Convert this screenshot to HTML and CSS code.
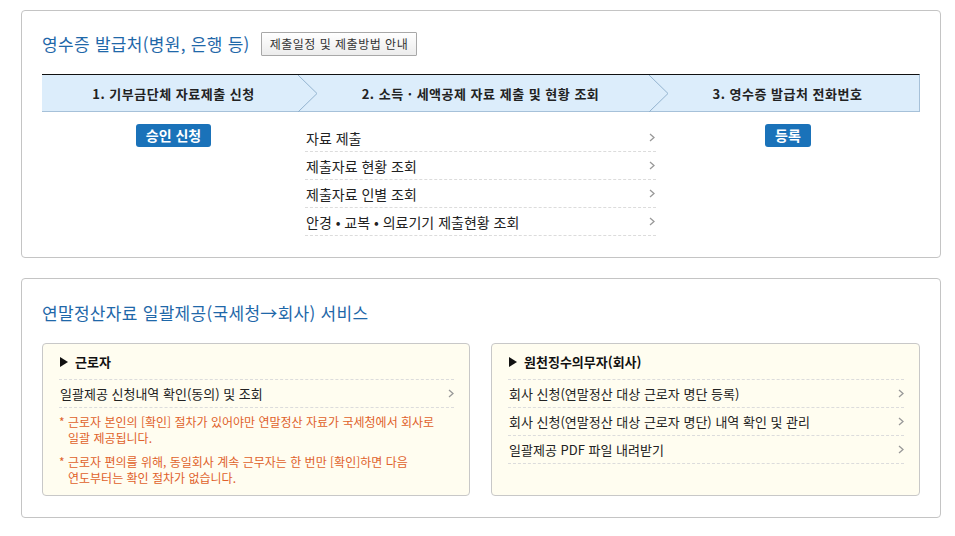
FILE: index.html
```html
<!DOCTYPE html>
<html lang="ko">
<head>
<meta charset="utf-8">
<title>영수증 발급처</title>
<link rel="stylesheet" href="styles.css">
</head>
<body>
<div class="page">
  <section class="panel panel-receipt">
    <div class="panel-head">
      <h2 class="panel-title">영수증 발급처(병원, 은행 등)</h2>
      <button class="guide-btn" type="button">제출일정 및 제출방법 안내</button>
    </div>
    <div class="steps">
      <div class="step">1. 기부금단체 자료제출 신청
        <svg class="step-arrow" viewBox="0 0 20 37" preserveAspectRatio="none"><polyline points="0,0 19,18.5 0,37" fill="none" stroke="#93b3cf" stroke-width="1"/></svg>
      </div>
      <div class="step">2. 소득 · 세액공제 자료 제출 및 현황 조회
        <svg class="step-arrow" viewBox="0 0 20 37" preserveAspectRatio="none"><polyline points="0,0 19,18.5 0,37" fill="none" stroke="#93b3cf" stroke-width="1"/></svg>
      </div>
      <div class="step">3. 영수증 발급처 전화번호</div>
    </div>
    <div class="step-body">
      <div class="step-col"><a class="btn-blue" href="#">승인 신청</a></div>
      <ul class="link-list">
        <li><span>자료 제출</span><svg class="chev" viewBox="0 0 6 9"><polyline points="1,1 5,4.5 1,8" fill="none" stroke="#999" stroke-width="1.3"/></svg></li>
        <li><span>제출자료 현황 조회</span><svg class="chev" viewBox="0 0 6 9"><polyline points="1,1 5,4.5 1,8" fill="none" stroke="#999" stroke-width="1.3"/></svg></li>
        <li><span>제출자료 인별 조회</span><svg class="chev" viewBox="0 0 6 9"><polyline points="1,1 5,4.5 1,8" fill="none" stroke="#999" stroke-width="1.3"/></svg></li>
        <li><span>안경 • 교복 • 의료기기 제출현황 조회</span><svg class="chev" viewBox="0 0 6 9"><polyline points="1,1 5,4.5 1,8" fill="none" stroke="#999" stroke-width="1.3"/></svg></li>
      </ul>
      <div class="step-col"><a class="btn-blue" href="#">등록</a></div>
    </div>
  </section>

  <section class="panel panel-bulk">
    <h2 class="panel-title">연말정산자료 일괄제공(국세청→회사) 서비스</h2>
    <div class="boxes">
      <div class="box">
        <h3 class="box-head"><span class="tri"></span>근로자</h3>
        <ul class="box-list">
          <li><span>일괄제공 신청내역 확인(동의) 및 조회</span><svg class="chev" viewBox="0 0 6 9"><polyline points="1,1 5,4.5 1,8" fill="none" stroke="#999" stroke-width="1.3"/></svg></li>
        </ul>
        <p class="note">* 근로자 본인의 [확인] 절차가 있어야만 연말정산 자료가 국세청에서 회사로 일괄 제공됩니다.</p>
        <p class="note">* 근로자 편의를 위해, 동일회사 계속 근무자는 한 번만 [확인]하면 다음 연도부터는 확인 절차가 없습니다.</p>
      </div>
      <div class="box">
        <h3 class="box-head"><span class="tri"></span>원천징수의무자(회사)</h3>
        <ul class="box-list">
          <li><span>회사 신청(연말정산 대상 근로자 명단 등록)</span><svg class="chev" viewBox="0 0 6 9"><polyline points="1,1 5,4.5 1,8" fill="none" stroke="#999" stroke-width="1.3"/></svg></li>
          <li><span>회사 신청(연말정산 대상 근로자 명단) 내역 확인 및 관리</span><svg class="chev" viewBox="0 0 6 9"><polyline points="1,1 5,4.5 1,8" fill="none" stroke="#999" stroke-width="1.3"/></svg></li>
          <li><span>일괄제공 PDF 파일 내려받기</span><svg class="chev" viewBox="0 0 6 9"><polyline points="1,1 5,4.5 1,8" fill="none" stroke="#999" stroke-width="1.3"/></svg></li>
        </ul>
      </div>
    </div>
  </section>
</div>
</body>
</html>
```
FILE: styles.css
```css
* { box-sizing: border-box; }

body {
  margin: 0;
  background: #fff;
  font-family: "Noto Sans CJK KR", "Noto Sans", sans-serif;
  color: #222;
}

.page {
  padding: 10px 0 0 21px;
}

.panel {
  width: 920px;
  border: 1px solid #c4c4c4;
  border-radius: 4px;
  background: #fff;
  padding: 21px 20px 21px 20px;
}

.panel-bulk {
  margin-top: 20px;
  padding-top: 23px;
  padding-bottom: 21px;
}

.panel-head {
  display: flex;
  align-items: center;
  height: 24px;
}

.panel-title {
  margin: 0;
  font-size: 17px;
  font-weight: normal;
  line-height: 22px;
  color: #1f68a9;
  letter-spacing: 0.3px;
}

.guide-btn {
  margin-left: 11px;
  height: 24px;
  padding: 0 8px;
  border: 1px solid #a8a8a8;
  border-radius: 1px;
  background: linear-gradient(#ffffff, #ececec);
  font-family: inherit;
  font-size: 12px;
  line-height: 22px;
  letter-spacing: 0.5px;
  color: #333;
}

.steps {
  margin-top: 18px;
  height: 38px;
  display: grid;
  grid-template-columns: 263px 351px 1fr;
  border-top: 1px solid #111;
  border-bottom: 1px solid #a6c1d9;
  border-right: 1px solid #a6c1d9;
  background: #dcedfb;
}

.step {
  position: relative;
  display: flex;
  align-items: center;
  justify-content: center;
  font-size: 13px;
  font-weight: bold;
  letter-spacing: 0.5px;
  color: #222;
}

.step-arrow {
  position: absolute;
  top: 0;
  left: calc(100% - 7px);
  width: 20px;
  height: 37px;
}

.step-body {
  margin-top: 12px;
  display: grid;
  grid-template-columns: 263px 351px 1fr;
}

.step-col {
  display: flex;
  justify-content: center;
  align-items: flex-start;
}

.btn-blue {
  display: inline-block;
  height: 23px;
  padding: 0 10px;
  border-radius: 3px;
  background: #1a72b9;
  color: #fff;
  font-size: 14px;
  font-weight: bold;
  line-height: 23px;
  text-decoration: none;
}

.link-list,
.box-list {
  list-style: none;
  margin: 0;
  padding: 0;
}

.link-list li,
.box-list li {
  height: 28px;
  display: flex;
  align-items: center;
  justify-content: space-between;
  border-bottom: 1px dashed #dcdcdc;
  font-size: 13px;
  color: #222;
}

.link-list li {
  padding: 0 1px 0 1px;
  font-size: 14px;
}

.box-list li {
  padding: 0 0 0 1px;
}

.chev {
  width: 6px;
  height: 9px;
  flex: none;
}

.boxes {
  margin-top: 19px;
  display: grid;
  grid-template-columns: 428px 429px;
  column-gap: 21px;
}

.box {
  min-height: 153px;
  border: 1px solid #c8c8c8;
  border-radius: 4px;
  background: #fffdf0;
  padding: 0 15px 8px 16px;
}

.box-head {
  margin: 0;
  height: 36px;
  display: flex;
  align-items: center;
  border-bottom: 1px dashed #dcdcdc;
  font-size: 13px;
  font-weight: bold;
  color: #111;
  padding-left: 1px;
}

.tri {
  width: 0;
  height: 0;
  border-top: 5px solid transparent;
  border-bottom: 5px solid transparent;
  border-left: 8px solid #111;
  margin-right: 7px;
}

.note {
  margin: 0;
  padding-left: 9px;
  text-indent: -9px;
  font-size: 12px;
  line-height: 16px;
  color: #e0612a;
  word-break: keep-all;
}

.box-list + .note {
  margin-top: 6px;
}

.note + .note {
  margin-top: 8px;
}
```
